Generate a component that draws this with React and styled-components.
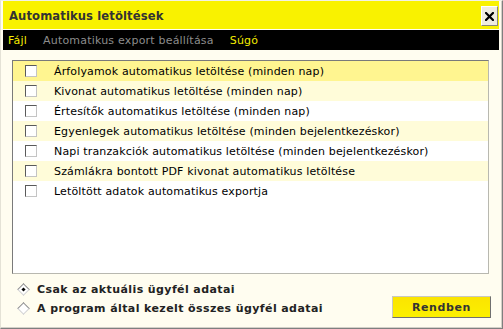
import React from "react";
import styled, { createGlobalStyle } from "styled-components";

const Global = createGlobalStyle`
  html, body { margin: 0; padding: 0; background: #fffdf0; }
  body { width: 503px; height: 329px; overflow: hidden; font-family: "DejaVu Sans", Verdana, sans-serif; }
`;

const Window = styled.div`
  box-sizing: border-box;
  width: 503px;
  height: 329px;
  background: #fffdf0;
  border-top: 1px solid #f2f1e6;
  border-left: 1px solid #e4e2d6;
  border-right: 1px solid #7f7f7f;
  border-bottom: 1px solid #7f7f7f;
  box-shadow: inset -1px -1px 0 #d4d0c8;
  padding: 0 3px 0 2px;
  display: flex;
  flex-direction: column;
`;

const TitleBar = styled.div`
  height: 28px;
  background: #f9f200;
  display: flex;
  align-items: center;
  justify-content: space-between;
  padding: 0 1px 0 6px;
`;

const Title = styled.div`
  font-family: "DejaVu Sans", Verdana, sans-serif;
  font-weight: bold;
  font-size: 11.6px;
  letter-spacing: 0.1px;
  color: #333333;
  margin-top: 1px;
`;

const CloseButton = styled.div`
  box-sizing: border-box;
  width: 17px;
  height: 20px;
  margin-top: 2px;
  background: #efecdf;
  border-top: 1px solid #ffffff;
  border-left: 1px solid #ffffff;
  border-right: 1px solid #8a887c;
  border-bottom: 1px solid #8a887c;
  display: flex;
  align-items: center;
  justify-content: center;
`;

const MenuBar = styled.div`
  height: 20px;
  margin-top: 1px;
  background: #000000;
  display: flex;
  align-items: center;
  padding-left: 5px;
  gap: 16px;
`;

const MenuItem = styled.span`
  font-size: 11px;
  letter-spacing: 0.2px;
  color: ${(p) => (p.$disabled ? "#8c8c8c" : "#f4ec00")};
  font-family: "DejaVu Sans", Verdana, sans-serif;
`;

const Body = styled.div`
  flex: 1;
  display: flex;
  flex-direction: column;
  padding: 10px 10px 0 9px;
`;

const ListBox = styled.div`
  box-sizing: border-box;
  height: 214px;
  background: #ffffff;
  border-top: 1px solid #7a7a7a;
  border-left: 1px solid #7a7a7a;
  border-right: 1px solid #b8b8b0;
  border-bottom: 1px solid #b8b8b0;
`;

const Row = styled.div`
  height: 20px;
  display: flex;
  align-items: center;
  background: ${(p) => (p.$selected ? "#fff590" : p.$alt ? "#fffcd9" : "#ffffff")};
  padding-left: 12px;
`;

const Check = styled.span`
  box-sizing: border-box;
  width: 12px;
  height: 12px;
  background: #ffffff;
  border-top: 1px solid #5a5a5a;
  border-left: 1px solid #5a5a5a;
  border-right: 1px solid #c4c4c4;
  border-bottom: 1px solid #c4c4c4;
  margin-right: 17px;
`;

const RowText = styled.span`
  font-size: 11px;
  letter-spacing: 0.15px;
  color: #000000;
  font-family: "DejaVu Sans", Verdana, sans-serif;
`;

const Footer = styled.div`
  display: flex;
  justify-content: space-between;
  align-items: flex-start;
  padding-top: 7px;
`;

const RadioGroup = styled.div`
  display: flex;
  flex-direction: column;
  gap: 3px;
  padding-left: 5px;
`;

const RadioRow = styled.div`
  display: flex;
  align-items: center;
  height: 16px;
`;

const Diamond = styled.span`
  position: relative;
  width: 9px;
  height: 9px;
  margin: 0 9px 0 2px;
  transform: rotate(45deg);
  box-sizing: border-box;
  background: #ffffff;
  border-top: 1px solid #8a8a8a;
  border-left: 1px solid #8a8a8a;
  border-right: 1px solid #d0d0d0;
  border-bottom: 1px solid #d0d0d0;
  &::after {
    content: "";
    display: ${(p) => (p.$checked ? "block" : "none")};
    position: absolute;
    left: 2px;
    top: 2px;
    width: 3px;
    height: 3px;
    background: #000000;
  }
`;

const RadioLabel = styled.span`
  font-size: 11px;
  font-weight: bold;
  color: #222222;
  letter-spacing: 0.4px;
  font-family: "DejaVu Sans", Verdana, sans-serif;
`;

const OkButton = styled.button`
  box-sizing: border-box;
  width: 99px;
  height: 22px;
  margin-top: 15px;
  margin-right: -2px;
  background: linear-gradient(#fbe400, #fbf000);
  border-top: 1px solid #c8c8c0;
  border-left: 1px solid #c8c8c0;
  border-right: 1px solid #707070;
  border-bottom: 1px solid #707070;
  font-family: "DejaVu Sans", Verdana, sans-serif;
  font-size: 11px;
  font-weight: bold;
  letter-spacing: 0.6px;
  color: #333333;
  padding: 0;
`;

const rows = [
  "Árfolyamok automatikus letöltése (minden nap)",
  "Kivonat automatikus letöltése (minden nap)",
  "Értesítők automatikus letöltése (minden nap)",
  "Egyenlegek automatikus letöltése (minden bejelentkezéskor)",
  "Napi tranzakciók automatikus letöltése (minden bejelentkezéskor)",
  "Számlákra bontott PDF kivonat automatikus letöltése",
  "Letöltött adatok automatikus exportja",
];

export default function App() {
  return (
    <>
      <Global />
      <Window>
        <TitleBar>
          <Title>Automatikus letöltések</Title>
          <CloseButton>
            <svg width="9" height="9" viewBox="0 0 9 9">
              <path d="M1 1 L8 8 M8 1 L1 8" stroke="#000" strokeWidth="2.2" strokeLinecap="square" />
            </svg>
          </CloseButton>
        </TitleBar>
        <MenuBar>
          <MenuItem>Fájl</MenuItem>
          <MenuItem $disabled>Automatikus export beállítása</MenuItem>
          <MenuItem>Súgó</MenuItem>
        </MenuBar>
        <Body>
          <ListBox>
            {rows.map((r, i) => (
              <Row key={i} $selected={i === 0} $alt={i % 2 === 1}>
                <Check />
                <RowText>{r}</RowText>
              </Row>
            ))}
          </ListBox>
          <Footer>
            <RadioGroup>
              <RadioRow>
                <Diamond $checked />
                <RadioLabel>Csak az aktuális ügyfél adatai</RadioLabel>
              </RadioRow>
              <RadioRow>
                <Diamond />
                <RadioLabel>A program által kezelt összes ügyfél adatai</RadioLabel>
              </RadioRow>
            </RadioGroup>
            <OkButton>Rendben</OkButton>
          </Footer>
        </Body>
      </Window>
    </>
  );
}
